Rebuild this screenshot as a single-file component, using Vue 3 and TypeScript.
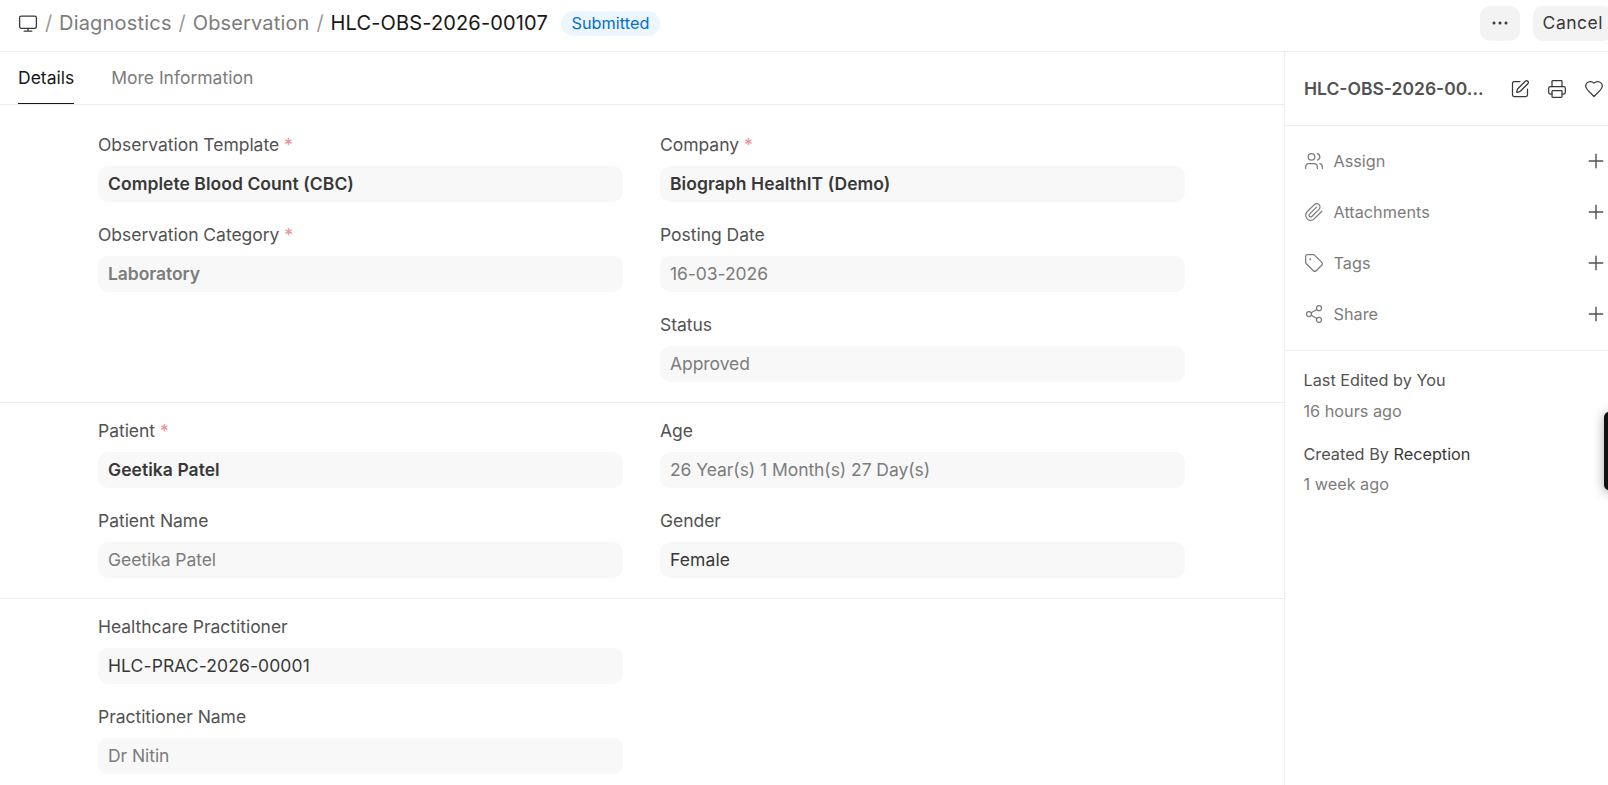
<script setup lang="ts">
interface Field {
  label: string
  value: string
  required?: boolean
  tone?: 'link' | 'bold' | 'bold-muted'
}

interface Section {
  id: string
  columns: Field[][]
}

const breadcrumbs = ['Diagnostics', 'Observation']

const sections: Section[] = [
  {
    id: 'observation',
    columns: [
      [
        { label: 'Observation Template', value: 'Complete Blood Count (CBC)', required: true, tone: 'bold' },
        { label: 'Observation Category', value: 'Laboratory', required: true, tone: 'bold-muted' },
      ],
      [
        { label: 'Company', value: 'Biograph HealthIT (Demo)', required: true, tone: 'bold' },
        { label: 'Posting Date', value: '16-03-2026' },
        { label: 'Status', value: 'Approved' },
      ],
    ],
  },
  {
    id: 'patient',
    columns: [
      [
        { label: 'Patient', value: 'Geetika Patel', required: true, tone: 'bold' },
        { label: 'Patient Name', value: 'Geetika Patel' },
      ],
      [
        { label: 'Age', value: '26 Year(s) 1 Month(s) 27 Day(s)' },
        { label: 'Gender', value: 'Female', tone: 'link' },
      ],
    ],
  },
  {
    id: 'practitioner',
    columns: [
      [
        { label: 'Healthcare Practitioner', value: 'HLC-PRAC-2026-00001', tone: 'link' },
        { label: 'Practitioner Name', value: 'Dr Nitin' },
      ],
      [],
    ],
  },
]

// 24x24 stroke icons
const icons = {
  edit: [
    'M12 3H5a2 2 0 0 0-2 2v14a2 2 0 0 0 2 2h14a2 2 0 0 0 2-2v-7',
    'M18.375 2.625a1 1 0 0 1 3 3l-9.013 9.014a2 2 0 0 1-.853.505l-2.873.84a.5.5 0 0 1-.62-.62l.84-2.873a2 2 0 0 1 .506-.852z',
  ],
  print: [
    'M6 18H4a2 2 0 0 1-2-2v-5a2 2 0 0 1 2-2h16a2 2 0 0 1 2 2v5a2 2 0 0 1-2 2h-2',
    'M6 9V3a1 1 0 0 1 1-1h10a1 1 0 0 1 1 1v6',
    'M7 14h10a1 1 0 0 1 1 1v6a1 1 0 0 1-1 1H7a1 1 0 0 1-1-1v-6a1 1 0 0 1 1-1z',
  ],
  heart: [
    'M19 14c1.49-1.46 3-3.21 3-5.5A5.5 5.5 0 0 0 16.5 3c-1.76 0-3 .5-4.5 2-1.5-1.5-2.74-2-4.5-2A5.5 5.5 0 0 0 2 8.5c0 2.3 1.5 4.05 3 5.5l7 7z',
  ],
  users: [
    'M16 21v-2a4 4 0 0 0-4-4H6a4 4 0 0 0-4 4v2',
    'M5 7a4 4 0 1 0 8 0a4 4 0 1 0-8 0',
    'M22 21v-2a4 4 0 0 0-3-3.87',
    'M16 3.13a4 4 0 0 1 0 7.75',
  ],
  paperclip: [
    'M21.44 11.05l-9.19 9.19a6 6 0 0 1-8.49-8.49l8.57-8.57A4 4 0 1 1 18 8.84l-8.59 8.57a2 2 0 0 1-2.83-2.83l8.49-8.48',
  ],
  tag: [
    'M12.586 2.586A2 2 0 0 0 11.172 2H4a2 2 0 0 0-2 2v7.172a2 2 0 0 0 .586 1.414l8.704 8.704a2.426 2.426 0 0 0 3.42 0l6.58-6.58a2.426 2.426 0 0 0 0-3.42z',
    'M7.1 7.5a.4.4 0 1 0 .8 0a.4.4 0 1 0-.8 0',
  ],
  share: [
    'M15 5a3 3 0 1 0 6 0a3 3 0 1 0-6 0',
    'M3 12a3 3 0 1 0 6 0a3 3 0 1 0-6 0',
    'M15 19a3 3 0 1 0 6 0a3 3 0 1 0-6 0',
    'M8.59 13.51l6.83 3.98',
    'M15.41 6.51l-6.82 3.98',
  ],
}

const headerActions = [
  { id: 'edit', paths: icons.edit },
  { id: 'print', paths: icons.print },
  { id: 'heart', paths: icons.heart },
]

const sidebarItems = [
  { label: 'Assign', paths: icons.users },
  { label: 'Attachments', paths: icons.paperclip },
  { label: 'Tags', paths: icons.tag },
  { label: 'Share', paths: icons.share },
]

const docName = 'HLC-OBS-2026-00107'
const shortName = `${docName.slice(0, 15)}...`
</script>

<template>
  <div class="page">
    <header class="page-head">
      <nav class="breadcrumbs">
        <svg class="desk-icon" viewBox="0 0 20 18">
          <rect x="1.6" y="1.1" width="16.8" height="12.2" rx="1.6" />
          <path d="M10 13.3v2.9M6.2 16.2h7.6" />
        </svg>
        <template v-for="crumb in breadcrumbs" :key="crumb">
          <span class="slash">/</span>
          <a class="crumb">{{ crumb }}</a>
        </template>
        <span class="slash">/</span>
        <span class="crumb current">{{ docName }}</span>
        <span class="badge">Submitted</span>
      </nav>
      <div class="page-actions">
        <button class="btn btn-icon" aria-label="Menu">
          <svg viewBox="0 0 20 20">
            <circle cx="4" cy="10" r="1.5" />
            <circle cx="10" cy="10" r="1.5" />
            <circle cx="16" cy="10" r="1.5" />
          </svg>
        </button>
        <button class="btn btn-text">Cancel</button>
      </div>
    </header>

    <div class="page-body">
      <main class="form">
        <div class="tabs">
          <button class="tab active">Details</button>
          <button class="tab">More Information</button>
        </div>
        <section v-for="s in sections" :key="s.id" class="form-section">
          <div v-for="(col, i) in s.columns" :key="i" class="form-column">
            <div v-for="f in col" :key="f.label" class="field">
              <label class="field-label">{{ f.label }}<span v-if="f.required" class="reqd"> *</span></label>
              <div class="field-value" :class="f.tone">{{ f.value }}</div>
            </div>
          </div>
        </section>
      </main>

      <aside class="sidebar">
        <div class="sidebar-head">
          <span class="sidebar-title">{{ shortName }}</span>
          <svg v-for="a in headerActions" :key="a.id" class="icon" viewBox="0 0 24 24">
            <path v-for="d in a.paths" :key="d" :d="d" />
          </svg>
        </div>
        <ul class="sidebar-items">
          <li v-for="item in sidebarItems" :key="item.label">
            <svg class="icon" viewBox="0 0 24 24">
              <path v-for="d in item.paths" :key="d" :d="d" />
            </svg>
            <span>{{ item.label }}</span>
            <svg class="plus" viewBox="0 0 16 16"><path d="M8 .8v14.4M.8 8h14.4" /></svg>
          </li>
        </ul>
        <div class="sidebar-meta">
          <p>Last Edited by You</p>
          <p class="time">16 hours ago</p>
          <p class="created">Created By <b>Reception</b></p>
          <p class="time">1 week ago</p>
        </div>
      </aside>
    </div>

    <div class="edge-handle"></div>
  </div>
</template>

<style>
body { margin: 0; background: #fff; overflow: hidden; }
</style>

<style scoped>
.page {
  position: relative; width: 100vw; height: 100vh; overflow: hidden;
  display: flex; flex-direction: column;
  font-family: Inter, sans-serif; font-size: 17.5px; color: #383838;
}
.page * { box-sizing: border-box; }
button { font: inherit; border: 0; background: none; padding: 0; cursor: pointer; }

.page-head {
  flex: none; height: 52px; padding: 0 0 5px 18px; border-bottom: 1px solid #ededed;
  display: flex; align-items: center; justify-content: space-between;
}
.breadcrumbs { display: flex; align-items: center; font-size: 20px; white-space: nowrap; }
.desk-icon { width: 20px; height: 18px; margin-top: 2px; fill: none; stroke: #383838; stroke-width: 1.3; stroke-linecap: round; }
.slash { width: 21px; text-align: center; color: #999; }
.crumb { color: #7c7c7c; letter-spacing: 0.15px; }
.crumb:first-of-type { letter-spacing: 0.2px; }
.crumb.current { color: #171717; }
.badge {
  height: 25px; line-height: 25px; padding: 0 10px; margin-left: 13.5px; border-radius: 13px;
  background: #edf6fd; color: #0070cc; font-size: 16.25px; letter-spacing: 0.05px;
}
.page-actions { display: flex; gap: 13px; margin-right: -5px; }
.btn { height: 35px; padding: 0 10px; border-radius: 10px; background: #f3f3f3; color: #383838; letter-spacing: 0.5px; }
.btn-text { padding-bottom: 2px; }
.btn-icon { width: 40px; display: flex; align-items: center; justify-content: center; }
.btn-icon svg { flex: none; width: 20px; height: 20px; fill: #383838; }

.page-body { flex: 1; min-height: 0; display: flex; }
.form { flex: 1; min-width: 0; overflow: hidden; }
.tabs { display: flex; gap: 37px; height: 53px; padding-left: 18px; border-bottom: 1px solid #ededed; }
.tab { height: 52px; color: #7c7c7c; border-bottom: 1px solid transparent; }
.tab.active { color: #171717; border-bottom-color: #171717; }

.form-section {
  display: grid; grid-template-columns: 525px 525px; column-gap: 37px;
  padding: 17px 0 20px 98px; border-bottom: 1px solid #ededed;
}
.tabs + .form-section { padding-top: 29px; }
.form-section:last-child { border-bottom: 0; }
.form-column { display: flex; flex-direction: column; gap: 22px; }
.field { height: 68px; display: flex; flex-direction: column; justify-content: space-between; }
.field-label { line-height: 22px; color: #525252; letter-spacing: -0.03px; }
.reqd { color: #eb9091; }
.field-value {
  height: 36px; line-height: 36px; padding: 0 10px; border-radius: 10px;
  background: #f8f8f8; color: #7c7c7c; letter-spacing: -0.06px;
}
.field-value.link { color: #383838; letter-spacing: 0.1px; }
.field-value.bold { color: #383838; font-weight: 600; letter-spacing: 0.05px; }
.field-value.bold-muted { font-weight: 600; }

.sidebar { flex: none; width: 324px; border-left: 1px solid #ededed; font-size: 16.25px; color: #7c7c7c; }
.icon { flex: none; width: 20px; height: 20px; fill: none; stroke: currentColor; stroke-width: 1.5; stroke-linecap: round; stroke-linejoin: round; }
.sidebar-head {
  height: 74px; padding: 0 3px 0 19px; border-bottom: 1px solid #ededed;
  display: flex; align-items: center; gap: 17px; color: #383838;
}
.sidebar-title {
  flex: none; width: 189px; white-space: nowrap;
  font-size: 17.5px; font-weight: 600; color: #525252;
}
.sidebar-items { list-style: none; margin: 0; padding: 9px 4px 10px 19px; border-bottom: 1px solid #ededed; }
.sidebar-items li { display: flex; align-items: center; height: 51.25px; }
.sidebar-items span { flex: 1; margin-left: 9.5px; }
.plus { width: 16px; height: 16px; fill: none; stroke: #525252; stroke-width: 1.4; }
.sidebar-meta { padding: 17px 0 0 18.5px; }
.sidebar-meta p { margin: 0; line-height: 24px; color: #525252; }
.sidebar-meta b { font-weight: 400; color: #383838; }
.sidebar-meta .time { margin-top: 7px; color: #7c7c7c; }
.sidebar-meta .created { margin-top: 19px; }
.sidebar-meta .created + .time { margin-top: 6px; }

/* collapsed panel peeking in from the window's right edge */
.edge-handle {
  position: absolute; left: 1604px; top: 412px; width: 40px; height: 78px;
  border-radius: 5px; background: #111; box-shadow: 0 2px 12px rgba(0, 0, 0, 0.35);
}
</style>
